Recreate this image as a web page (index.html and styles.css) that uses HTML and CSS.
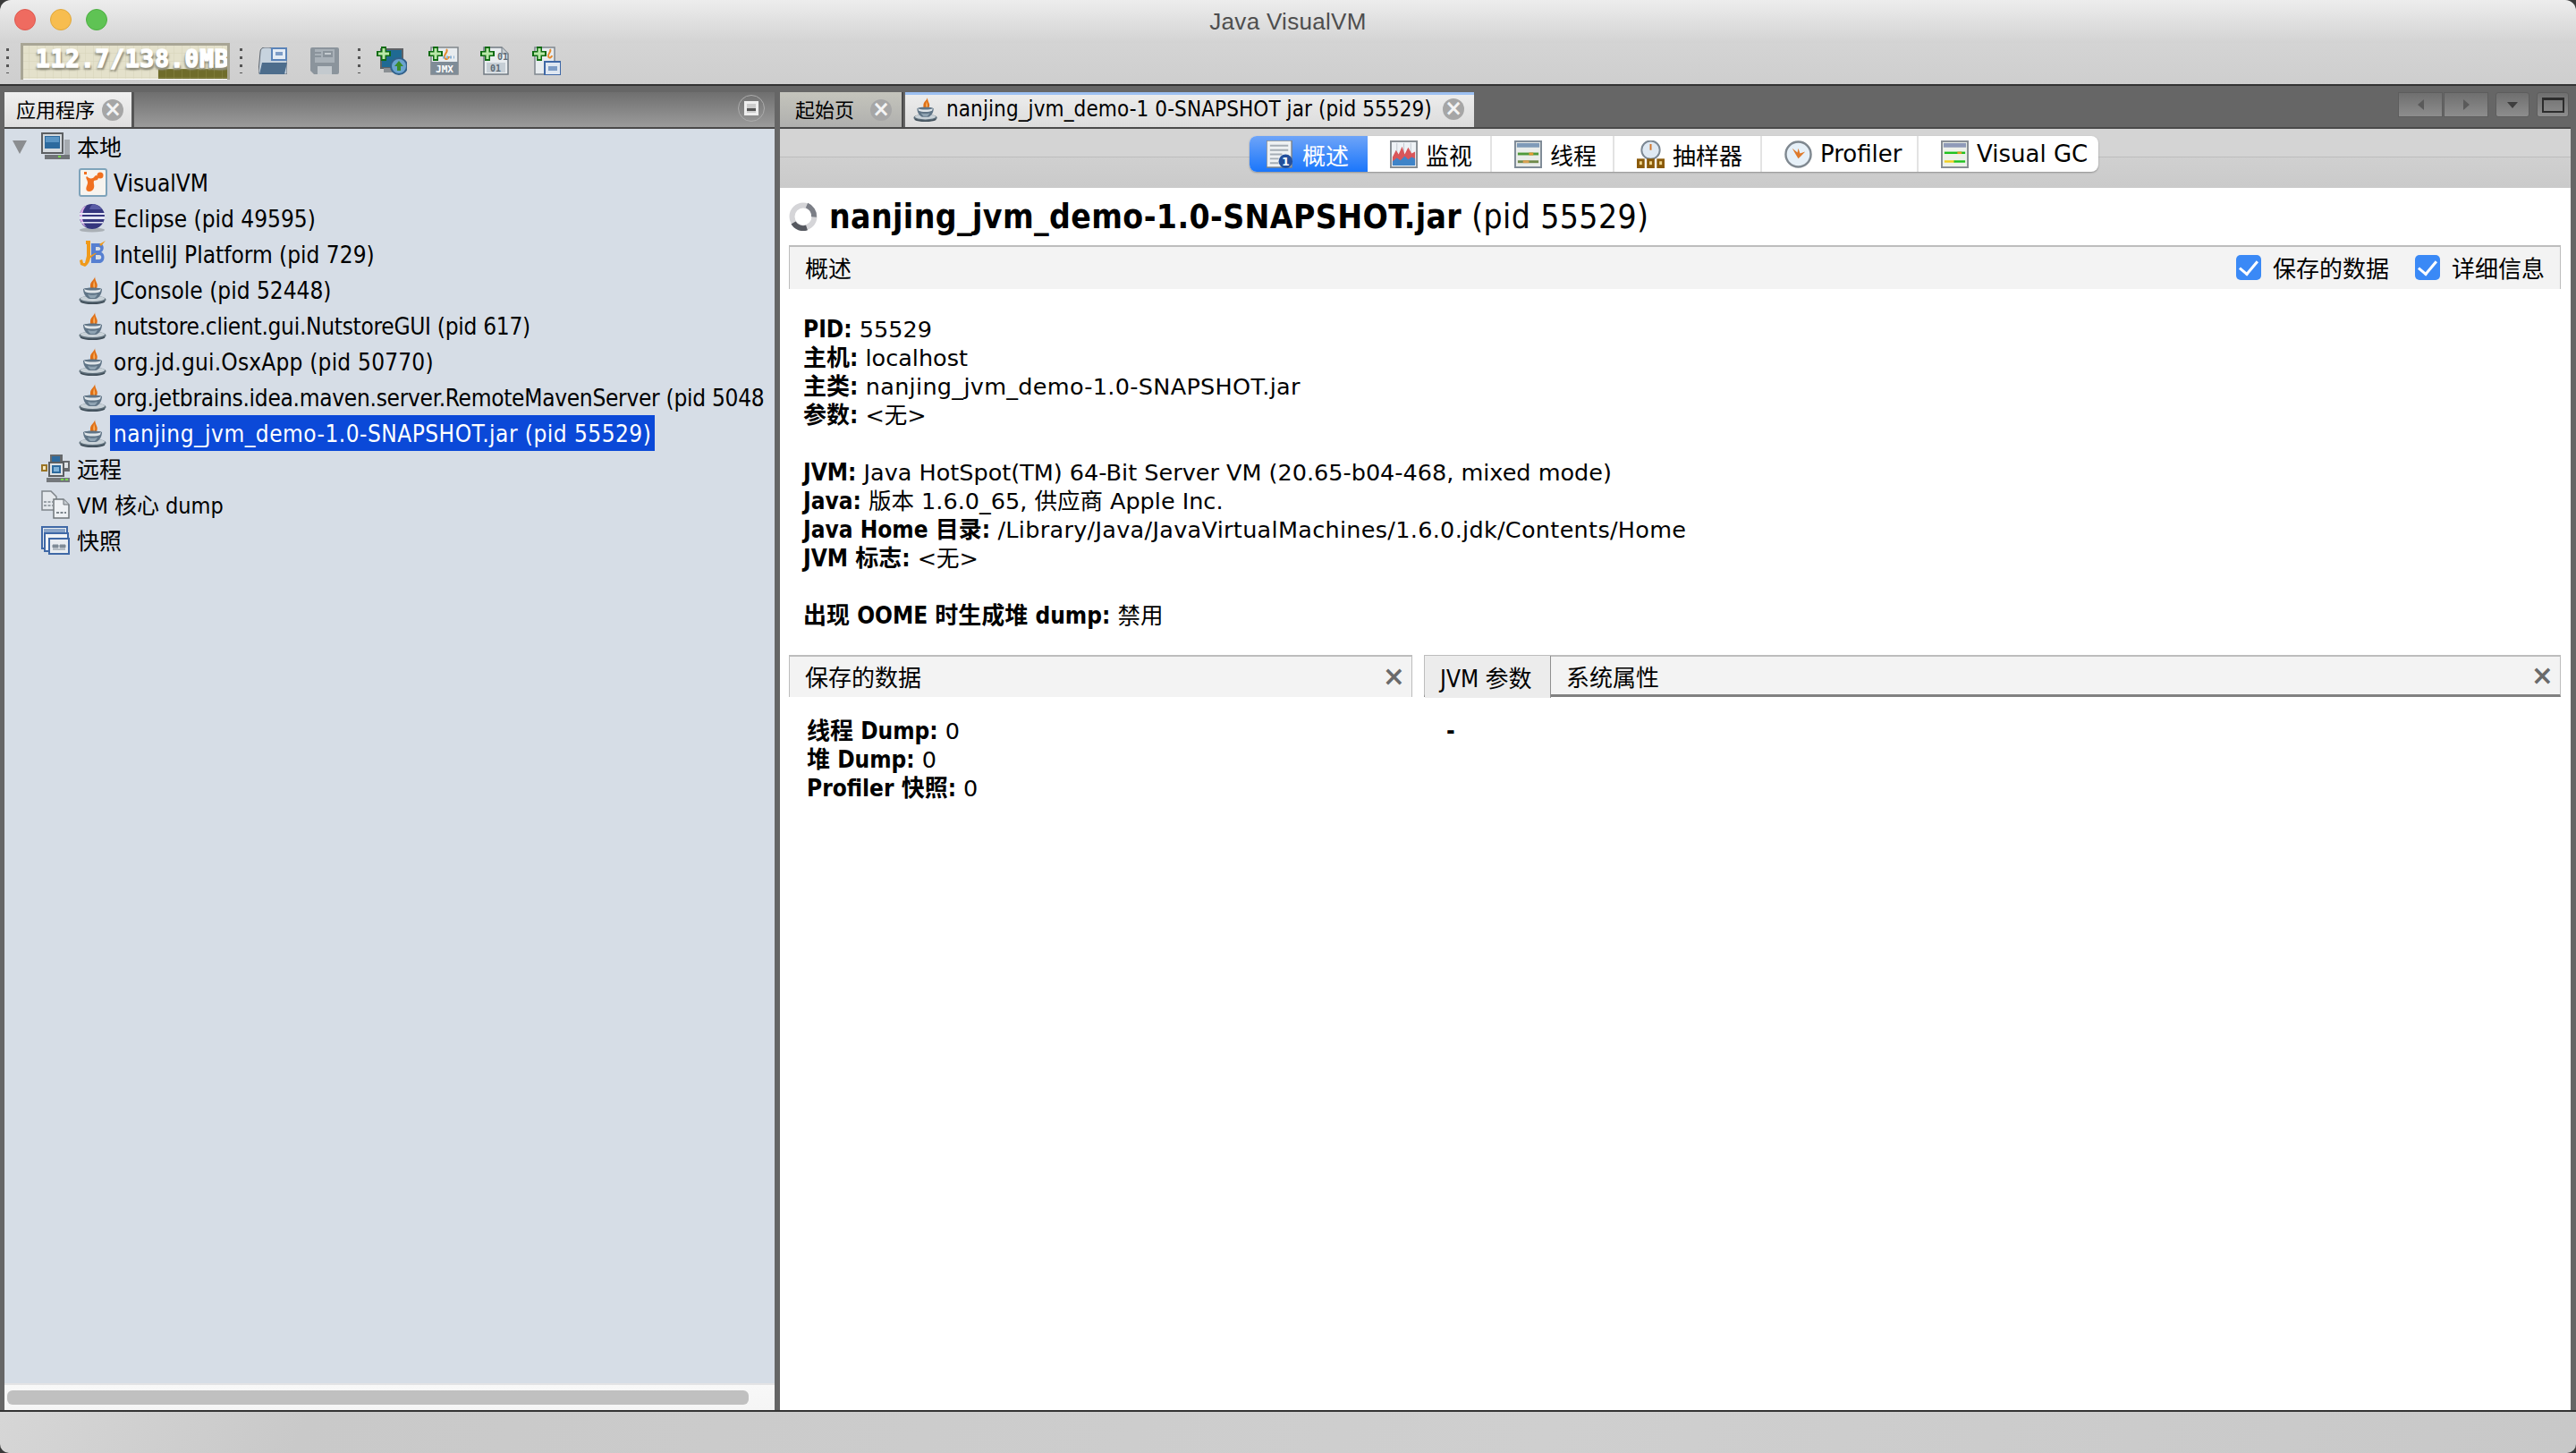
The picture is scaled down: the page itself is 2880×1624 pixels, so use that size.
FILE: index.html
```html
<!DOCTYPE html>
<html lang="zh">
<head>
<meta charset="utf-8">
<title>Java VisualVM</title>
<link rel="stylesheet" href="styles.css">
</head>
<body>
<svg class="defs" width="0" height="0" aria-hidden="true">
  <defs>
    <symbol id="java" viewBox="0 0 32 32">
      <path d="M18 0c1 4-5 6-5 11-.5 3 1 5 2 7 5-2 7-6 5-10-1-2-2-5-2-8z" fill="#e06f14"/>
      <path d="M17 5c0 3-1.500 5-.5 8l.5 2c1.500-2 1.500-4 1-6z" fill="#f6b060"/>
      <ellipse cx="15.500" cy="27" rx="15" ry="4.500" fill="#5f6f7b"/>
      <ellipse cx="15.500" cy="25.800" rx="13.500" ry="3.200" fill="#c9d2d8"/>
      <path d="M5 15c3-2 18-2 21 0 0 5-3 10-7 11h-7c-4-1-7-6-7-11z" fill="#5f7486"/>
      <path d="M6 15c3 2 16 2 19 0l-1 3c-4 2-13 2-17 0z" fill="#dfe5e9"/>
      <path d="M10 21c3 1 8 1 11 0-1 2-2 3-3 4h-5c-1-1-2-2-3-4z" fill="#8fa3b2"/>
      <path d="M2 29c6 3 21 3 27 0" stroke="#3f4d58" stroke-width="1.500" fill="none"/>
    </symbol>
    <symbol id="plus" viewBox="0 0 16 16">
      <path d="M5 0h6v5h5v6h-5v5H5v-5H0V5h5z" fill="#0e6b12"/>
      <path d="M6.500 2h3v4.500H14v3H9.500V14h-3V9.500H2v-3h4.500z" fill="#b9e8a8"/>
    </symbol>
    <symbol id="monitor" viewBox="0 0 32 32">
      <rect x="0" y="0" width="25" height="24" fill="#5c5f62"/>
      <rect x="2" y="2" width="21" height="20" fill="#d5dade"/>
      <rect x="4" y="4" width="17" height="14" fill="#2d6a9e"/>
      <rect x="5" y="5" width="15" height="6" fill="#5b95c4"/>
      <path d="M26 8h6v22h-24v-5h18z" fill="#a6abb0"/>
      <rect x="4" y="25" width="28" height="5" fill="#707478"/>
      <rect x="19" y="26" width="3" height="2" fill="#79d84a"/>
    </symbol>
    <symbol id="remote" viewBox="0 0 32 32">
      <rect x="10" y="0" width="14" height="10" fill="#66696c"/><rect x="12" y="2" width="9" height="6" fill="#2d6a9e"/>
      <rect x="22" y="7" width="10" height="12" fill="#66696c"/><rect x="24" y="9" width="6" height="6" fill="#dfe3e6"/>
      <rect x="8" y="8" width="18" height="17" fill="#5c5f62"/><rect x="10" y="10" width="14" height="13" fill="#dfe3e6"/>
      <rect x="12" y="12" width="10" height="9" fill="#2d6a9e"/><rect x="14" y="14" width="6" height="5" fill="#7fb2d9"/>
      <rect x="0" y="11" width="7" height="8" fill="#9a7424"/><rect x="2" y="13" width="3" height="4" fill="#f3e7c2"/>
      <rect x="6" y="26" width="26" height="5" fill="#74787c"/><rect x="22" y="27" width="3" height="2" fill="#79d84a"/><rect x="27" y="27" width="3" height="2" fill="#79d84a"/>
    </symbol>
    <symbol id="coredump" viewBox="0 0 32 32">
      <path d="M1 1h10l6 6v15H1z" fill="#e4e8ec" stroke="#7f858a" stroke-width="1.500"/>
      <path d="M3 13h10M3 17h10" stroke="#9aa2a8" stroke-width="2" stroke-dasharray="3 1.500"/>
      <path d="M14 10h11l6 6v15H14z" fill="#eef1f4" stroke="#6f757a" stroke-width="1.500"/>
      <path d="M25 10v6h6" fill="#c7cdd2" stroke="#6f757a"/>
      <path d="M17 25h11" stroke="#7d868c" stroke-width="2" stroke-dasharray="3 1.500"/>
    </symbol>
    <symbol id="snapshot" viewBox="0 0 32 32">
      <rect x="1" y="1" width="28" height="24" fill="#e9edf1" stroke="#3f68a6" stroke-width="2"/>
      <rect x="3" y="3" width="24" height="4" fill="#8aa5c9"/>
      <rect x="4" y="8" width="26" height="20" fill="#f0f3f6" stroke="#3f68a6" stroke-width="2"/>
      <rect x="9" y="14" width="22" height="17" fill="#e9edf1" stroke="#3f68a6" stroke-width="2"/>
      <path d="M13 21h6v3h-6zM21 21h6v3h-6zM13 26h14" fill="#7f8b96" stroke="#7f8b96"/>
    </symbol>
  </defs>
</svg>

<div class="window">
  <header class="titlebar">
    <div class="lights">
      <span class="light light-red"></span>
      <span class="light light-yellow"></span>
      <span class="light light-green"></span>
    </div>
    <div class="window-title">Java VisualVM</div>
  </header>

  <div class="toolbar">
    <span class="grip"></span>
    <div class="memory">
      <svg class="memory-chart" width="234" height="38" viewBox="0 0 234 38">
        <defs>
          <pattern id="memgrid" width="9" height="9" patternUnits="userSpaceOnUse">
            <path d="M9 0H0V9" fill="none" stroke="#d6d3ba" stroke-width="1"/>
          </pattern>
          <pattern id="memfill" width="9" height="9" patternUnits="userSpaceOnUse">
            <rect width="9" height="9" fill="#6f6c2a"/>
            <path d="M9 0H0V9" fill="none" stroke="#8b8845" stroke-width="1"/>
          </pattern>
        </defs>
        <rect width="234" height="38" fill="#e4e1cb"/>
        <rect width="234" height="38" fill="url(#memgrid)"/>
        <path d="M154 38V27H214V22H226V13H231V38z" fill="url(#memfill)"/>
      </svg>
      <span class="memory-text">112.7/138.0MB</span>
    </div>
    <span class="grip grip-b"></span>
    <button class="tool tool-open" aria-label="打开">
      <svg width="32" height="30" viewBox="0 0 32 30">
        <path d="M2 5c0-3 2-5 5-5h5c2 0 3 2 3 4v8h17v18H3c-2 0-3-1-3-3z" fill="#c7d3de" stroke="#59616a"/>
        <rect x="14" y="0" width="18" height="15" fill="#5a83b8"/><rect x="16" y="2" width="14" height="11" fill="#e4ecf5"/><rect x="19" y="5" width="8" height="4" fill="#7d9cc6"/>
        <path d="M4 17h28l-3 13H1z" fill="#4d6d8c"/>
      </svg>
    </button>
    <button class="tool tool-save" aria-label="保存">
      <svg width="32" height="30" viewBox="0 0 32 30">
        <path d="M0 2q0-2 2-2h28q2 0 2 2v26q0 2-2 2H4l-4-4z" fill="#8b949c"/>
        <rect x="5" y="2" width="22" height="15" fill="#a9b1b8"/><rect x="14" y="4" width="11" height="7" fill="#8b949c"/><rect x="16" y="6" width="7" height="2" fill="#c5cbd0"/>
        <path d="M5 6h7M5 10h7" stroke="#8b949c" stroke-width="2"/>
        <rect x="8" y="21" width="16" height="9" fill="#c3c9ce"/>
      </svg>
    </button>
    <span class="grip grip-c"></span>
    <button class="tool tool-add" aria-label="添加远程主机">
      <svg width="34" height="32" viewBox="0 0 34 32">
        <rect x="4" y="2" width="26" height="23" fill="#5e6165"/><rect x="6" y="4" width="22" height="19" fill="#1f6a93"/>
        <rect x="8" y="24" width="18" height="5" fill="#8a8f93"/>
        <circle cx="25" cy="22" r="9" fill="#6aa3cf" stroke="#31608a" stroke-width="2"/>
        <path d="M25 16l5 6h-3v5h-4v-5h-3z" fill="#3a8b2b"/>
        <use href="#plus" width="16" height="16" x="0" y="0"/>
      </svg>
    </button>
    <button class="tool tool-add" aria-label="添加 JMX">
      <svg width="34" height="32" viewBox="0 0 34 32">
        <rect x="3" y="1" width="30" height="30" fill="#e8ecef" stroke="#80868c" stroke-width="1.500"/>
        <path d="M20 3c3 3-3 5-2 9s5 1 5-1" stroke="#e68a2e" stroke-width="2" fill="none"/>
        <path d="M16 12h13" stroke="#8db2d4" stroke-width="3" stroke-dasharray="2 2"/>
        <rect x="3" y="17" width="30" height="14" fill="#7f8c97"/>
        <text class="icon-jmx" x="18" y="29" text-anchor="middle">JMX</text>
        <use href="#plus" width="16" height="16" x="0" y="0"/>
      </svg>
    </button>
    <button class="tool tool-dump" aria-label="添加转储">
      <svg width="32" height="32" viewBox="0 0 32 32">
        <path d="M4 1h20l7 7v23H4z" fill="#e8ecef" stroke="#707a82" stroke-width="1.500"/>
        <path d="M24 1v7h7" fill="#c7cdd2" stroke="#707a82"/>
        <text class="icon-bits" x="25" y="15" text-anchor="middle">01</text>
        <rect x="7" y="18" width="21" height="11" fill="#c6ced5"/>
        <text class="icon-bits" x="17" y="28" text-anchor="middle">01</text>
        <use href="#plus" width="16" height="16" x="0" y="0"/>
      </svg>
    </button>
    <button class="tool tool-snap" aria-label="添加快照">
      <svg width="32" height="32" viewBox="0 0 32 32">
        <rect x="3" y="1" width="22" height="30" fill="#e8ecef" stroke="#7f878e" stroke-width="1.500"/>
        <path d="M20 3c2 3-3 5-2 8s4 1 4-1" stroke="#e68a2e" stroke-width="2" fill="none"/>
        <rect x="14" y="17" width="18" height="15" fill="#dfe7f1" stroke="#3f68a6" stroke-width="2"/>
        <rect x="18" y="22" width="10" height="5" fill="#7d9cc6"/>
        <use href="#plus" width="16" height="16" x="0" y="0"/>
      </svg>
    </button>
  </div>

  <main class="main">
    <section class="left">
      <div class="strip strip-left">
        <div class="tab tab-app">
          <span>应用程序</span>
          <span class="round-x">×</span>
        </div>
        <span class="pane-btn"><i></i></span>
      </div>
      <div class="tree">
        <div class="row row-root">
          <span class="arrow"></span>
          <svg class="ico"><use href="#monitor"/></svg>
          <span class="label">本地</span>
        </div>
        <div class="row row-child">
          <svg class="ico" viewBox="0 0 32 32">
            <rect x="1" y="1" width="30" height="30" rx="2" fill="#f7f4ef" stroke="#7ea3ba" stroke-width="2"/>
            <path d="M6 4h3v3H6zM9 9c2 2 4 3 7 2l3-3 4 1-2 4-4 1c-1 3 1 5 0 8-1 4-6 5-8 3-2-3 1-6 1-9 0-3-3-5-1-7z" fill="#f0701f"/>
            <circle cx="24" cy="8" r="3.500" fill="#f0701f"/>
          </svg>
          <span class="label">VisualVM</span>
        </div>
        <div class="row row-child">
          <svg class="ico" viewBox="0 0 32 32">
            <ellipse cx="15" cy="29" rx="14" ry="2.500" fill="#aab0b6"/>
            <circle cx="15" cy="14" r="14" fill="#35367e"/>
            <path d="M1 14a14 14 0 0 1 8-12.500c-3 3-5 7-5 12.500s2 9 5 12A14 14 0 0 1 1 14z" fill="#d9a9e6"/>
            <path d="M1 10h28v2H1zM1 14h28v3H1zM3 20h24v1.500H3z" fill="#e4e6f5"/>
            <path d="M16 0a14 14 0 0 1 10 6H12c1-3 2-5 4-6z" fill="#5a5ca5"/>
          </svg>
          <span class="label">Eclipse (pid 49595)</span>
        </div>
        <div class="row row-child">
          <svg class="ico" viewBox="0 0 32 32">
            <path d="M14 4h9c6 0 6 8 2 10 5 1 5 12-2 12h-9z" fill="#567fd1"/>
            <path d="M19 8v4h3c3 0 3-4 0-4zM19 17v5h4c3 0 3-5 0-5z" fill="#d6dde6"/>
            <path d="M8 1h5l0 18c0 5-3 9-6 11l-5-2-1-5 3-1 1 4 2 0 2-8V5H8z" fill="#f09a1a"/>
            <path d="M11 19l7-4 2 0-9 7zM23 5l7-4-5 6z" fill="#f09a1a"/>
          </svg>
          <span class="label">IntelliJ Platform (pid 729)</span>
        </div>
        <div class="row row-child"><svg class="ico"><use href="#java"/></svg><span class="label">JConsole (pid 52448)</span></div>
        <div class="row row-child"><svg class="ico"><use href="#java"/></svg><span class="label fit-tight">nutstore.client.gui.NutstoreGUI (pid 617)</span></div>
        <div class="row row-child"><svg class="ico"><use href="#java"/></svg><span class="label fit-loose">org.jd.gui.OsxApp (pid 50770)</span></div>
        <div class="row row-child"><svg class="ico"><use href="#java"/></svg><span class="label fit-tight">org.jetbrains.idea.maven.server.RemoteMavenServer (pid 5048</span></div>
        <div class="row row-child"><svg class="ico"><use href="#java"/></svg><span class="label label-selected">nanjing_jvm_demo-1.0-SNAPSHOT.jar (pid 55529)</span></div>
        <div class="row row-root row-noarrow"><svg class="ico"><use href="#remote"/></svg><span class="label">远程</span></div>
        <div class="row row-root row-noarrow"><svg class="ico"><use href="#coredump"/></svg><span class="label">VM 核心 dump</span></div>
        <div class="row row-root row-noarrow"><svg class="ico"><use href="#snapshot"/></svg><span class="label">快照</span></div>
      </div>
      <div class="hscroll"><div class="thumb"></div></div>
    </section>

    <section class="right">
      <div class="strip strip-right">
        <div class="tab tab-start">
          <span>起始页</span>
          <span class="round-x">×</span>
        </div>
        <div class="tab tab-active">
          <svg class="ico-tab"><use href="#java"/></svg>
          <span class="tab-active-text">nanjing_jvm_demo-1 0-SNAPSHOT jar (pid 55529)</span>
          <span class="round-x">×</span>
        </div>
        <div class="strip-tools">
          <div class="tbtn-group">
            <span class="tbtn tbtn-nav"><i class="tri tri-left"></i></span>
            <span class="tbtn tbtn-nav"><i class="tri tri-right"></i></span>
          </div>
          <span class="tbtn tbtn-menu"><i class="tri tri-down"></i></span>
          <span class="tbtn tbtn-max"><i class="max-box"></i></span>
        </div>
      </div>

      <div class="subbar">
        <div class="views">
          <div class="view view-on">
            <svg class="view-ico" viewBox="0 0 32 32">
              <rect x="0" y="0" width="29" height="31" fill="#eef1f3" stroke="#77808a" stroke-width="1.500"/>
              <path d="M4 6h21M4 11h21M4 16h14M4 21h10M4 26h10" stroke="#a5adb5" stroke-width="2"/>
              <circle cx="22" cy="24" r="8" fill="#234f9b"/>
              <text class="icon-info" x="22" y="29" text-anchor="middle">1</text>
            </svg>
            <span>概述</span>
          </div>
          <div class="view">
            <svg class="view-ico" viewBox="0 0 32 32">
              <rect x="1" y="1" width="30" height="30" fill="#eef2f6" stroke="#868c92" stroke-width="2"/>
              <path d="M8 3v26M16 3v26M24 3v26" stroke="#c2c8cf"/>
              <path d="M3 19l4-8 3 5 4-9 3 9 4-8 4 7 4-2v15H3z" fill="#d9565a"/>
              <path d="M3 24l5-4 4 3 5-5 4 4 4-3 4 2v8H3z" fill="#3f84c8"/>
            </svg>
            <span>监视</span>
          </div>
          <div class="view">
            <svg class="view-ico" viewBox="0 0 32 32">
              <rect x="1" y="1" width="30" height="30" fill="#e9ecea" stroke="#7e8a96" stroke-width="2"/>
              <rect x="3" y="3" width="26" height="5" fill="#7e9ab8"/>
              <rect x="4" y="14" width="24" height="3" fill="#4f9a3a"/><rect x="17" y="14" width="5" height="3" fill="#e09a30"/>
              <rect x="4" y="23" width="24" height="3" fill="#6f8a4a"/><rect x="10" y="23" width="7" height="3" fill="#d8a050"/>
            </svg>
            <span>线程</span>
          </div>
          <div class="view">
            <svg class="view-ico" viewBox="0 0 32 32">
              <circle cx="16" cy="11" r="10.500" fill="#dfe9f3" stroke="#7c8894" stroke-width="2"/>
              <path d="M16 4v7" stroke="#d2752a" stroke-width="2"/>
              <rect x="0" y="21" width="9" height="11" fill="#8a5a0a"/><rect x="3" y="24" width="3" height="4" fill="#efd48a"/>
              <rect x="11.500" y="21" width="9" height="11" fill="#8a5a0a"/><rect x="14.500" y="24" width="3" height="4" fill="#efd48a"/>
              <rect x="23" y="21" width="9" height="11" fill="#8a5a0a"/><rect x="26" y="24" width="3" height="4" fill="#efd48a"/>
            </svg>
            <span>抽样器</span>
          </div>
          <div class="view">
            <svg class="view-ico" viewBox="0 0 32 32">
              <circle cx="16" cy="16" r="14.500" fill="#e6f0f8" stroke="#7f8890" stroke-width="2.500"/>
              <path d="M9 9l6 5 1-5 2 6 6-2-5 5-3 3-3-5z" fill="#de7a2c"/>
            </svg>
            <span>Profiler</span>
          </div>
          <div class="view">
            <svg class="view-ico" viewBox="0 0 32 32">
              <rect x="1" y="1" width="30" height="30" fill="#eef1ea" stroke="#868c92" stroke-width="2"/>
              <rect x="3" y="3" width="26" height="5" fill="#8f9ab8"/>
              <rect x="4" y="13" width="24" height="2.500" fill="#1fc21f"/><rect x="19" y="13" width="5" height="2.500" fill="#e0a020"/>
              <rect x="4" y="23" width="12" height="2.500" fill="#f0d020"/><rect x="15" y="23" width="13" height="2.500" fill="#1fc21f"/>
            </svg>
            <span>Visual GC</span>
          </div>
        </div>
      </div>

      <div class="content">
        <h1 class="heading">
          <svg class="spinner" viewBox="0 0 32 32">
            <circle cx="16" cy="16" r="12.500" fill="none" stroke="#d5d5d8" stroke-width="6"/>
            <path d="M5 23a13 13 0 0 0 15 5.500" fill="none" stroke="#55585f" stroke-width="6"/>
            <path d="M20 3.500a13 13 0 0 1 8 13" fill="none" stroke="#7b7e86" stroke-width="6"/>
          </svg>
          <span><b>nanjing_jvm_demo-1.0-SNAPSHOT.jar</b> (pid 55529)</span>
        </h1>

        <div class="section-bar">
          <span>概述</span>
          <div class="checks">
            <label class="check"><i class="box"></i>保存的数据</label>
            <label class="check"><i class="box"></i>详细信息</label>
          </div>
        </div>

        <div class="details">
          <div class="line"><b>PID:</b> 55529</div>
          <div class="line"><b>主机:</b> localhost</div>
          <div class="line line-wide"><b>主类:</b> nanjing_jvm_demo-1.0-SNAPSHOT.jar</div>
          <div class="line"><b>参数:</b> &lt;无&gt;</div>
          <div class="line line-gap"><b>JVM:</b> Java HotSpot(TM) 64-Bit Server VM (20.65-b04-468, mixed mode)</div>
          <div class="line"><b>Java:</b> 版本 1.6.0_65, 供应商 Apple Inc.</div>
          <div class="line line-wide"><b>Java Home 目录:</b> /Library/Java/JavaVirtualMachines/1.6.0.jdk/Contents/Home</div>
          <div class="line"><b>JVM 标志:</b> &lt;无&gt;</div>
          <div class="line line-gap"><b>出现 OOME 时生成堆 dump:</b> 禁用</div>
        </div>

        <div class="panels">
          <div class="panel">
            <div class="panel-bar">
              <span class="panel-title">保存的数据</span>
              <span class="flat-x">×</span>
            </div>
            <div class="panel-body panel-body-saved">
              <div class="line"><b>线程 Dump:</b> 0</div>
              <div class="line"><b>堆 Dump:</b> 0</div>
              <div class="line"><b>Profiler 快照:</b> 0</div>
            </div>
          </div>
          <div class="panel">
            <div class="panel-bar panel-bar-tabs">
              <span class="ptab ptab-on">JVM 参数</span>
              <span class="ptab">系统属性</span>
              <span class="flat-x flat-x-end">×</span>
            </div>
            <div class="panel-body panel-body-args">
              <div class="line"><b>-</b></div>
            </div>
          </div>
        </div>
      </div>
    </section>
  </main>

  <footer class="status"></footer>
</div>
</body>
</html>
```

FILE: styles.css
```css
* { box-sizing: border-box; }
html, body { margin: 0; padding: 0; background: #3a3a3a; }
body {
  width: 2880px;
  height: 1624px;
  overflow: hidden;
  font-family: "DejaVu Sans", "Noto Sans CJK SC", sans-serif;
  font-stretch: condensed;
  color: #000;
}
.defs { position: absolute; }
button { border: 0; background: none; padding: 0; margin: 0; display: block; line-height: 0; }

.window {
  width: 2880px;
  height: 1624px;
  display: flex;
  flex-direction: column;
  border-radius: 12px 12px 10px 10px;
  overflow: hidden;
}

/* title bar */
.titlebar {
  height: 48px;
  flex: none;
  position: relative;
  display: flex;
  align-items: center;
  justify-content: center;
  background: linear-gradient(#ededed, #d3d3d3);
}
.lights { position: absolute; left: 16px; top: 10px; display: flex; gap: 16px; }
.light { width: 24px; height: 24px; border-radius: 50%; display: block; }
.light-red { background: #ef6b60; border: 1px solid #dd5a50; }
.light-yellow { background: #f7bd4f; border: 1px solid #dfa73c; }
.light-green { background: #5fc354; border: 1px solid #4dae43; }
.window-title { font-size: 26px; color: #4e4e4e; font-family: "Liberation Sans", sans-serif; letter-spacing: .3px; }

/* toolbar */
.toolbar {
  height: 46px;
  flex: none;
  display: flex;
  align-items: center;
  padding: 0 0 6px 7px;
  background: linear-gradient(#d4d4d4, #cecece);
}
.grip {
  width: 3px;
  height: 28px;
  flex: none;
  margin-right: 13px;
  background: repeating-linear-gradient(#555 0 3px, transparent 3px 9px);
}
.grip-b { margin-left: 11px; margin-right: 18px; }
.grip-c { margin-left: 21px; margin-right: 18px; }
.memory {
  position: relative;
  width: 234px;
  height: 41px;
  flex: none;
  margin-top: 1px;
  border: 3px solid #a8a595;
  border-bottom: 0;
  box-shadow: inset 0 -3px 0 #fff;
  overflow: hidden;
}
.memory-chart { display: block; position: absolute; left: -3px; top: -1px; }
.memory-text {
  position: absolute;
  left: 14px;
  top: 0;
  font: bold 26px/30px "DejaVu Sans Mono", monospace;
  letter-spacing: 1px;
  color: #fff;
  -webkit-text-stroke: 1.5px #fff;
  text-shadow: 2px 3px 2px #8f8d7c, -2px 3px 2px #9b9987;
  white-space: nowrap;
}
.tool-open { margin-right: 26px; }
.tool-save { margin-right: 0; }
.tool-add { margin-right: 24px; }
.tool-dump { margin-right: 26px; }
.icon-jmx { font: bold 11px "DejaVu Sans Mono", monospace; fill: #fff; }
.icon-bits { font: bold 10px "DejaVu Sans Mono", monospace; fill: #5d6a75; }
.icon-info { font: bold 13px "DejaVu Sans", sans-serif; fill: #fff; }

/* main area */
.main {
  flex: 1;
  min-height: 0;
  display: flex;
  gap: 6px;
  padding: 0 6px 0 5px;
  background: #666;
  border-top: 2px solid #333;
  border-bottom: 2px solid #333;
}
.left { width: 861px; flex: none; display: flex; flex-direction: column; }
.right { flex: 1; min-width: 0; display: flex; flex-direction: column; }

.strip { height: 48px; flex: none; display: flex; align-items: flex-end; position: relative; padding-bottom: 2px; border-bottom: 2px solid #4a4a4a; }
.strip-left { background: linear-gradient(#666 0 7px, #6f6f6f 7px, #9b9b9b 100%); }
.strip-right { background: #666; gap: 2px; }

.tab {
  height: 39px;
  display: flex;
  align-items: center;
  padding-bottom: 2px;
  font-size: 23px;
  flex: none;
  position: relative;
  top: 2px;
}
.tab-app { width: 145px; padding: 0 9px 0 13px; justify-content: space-between; background: linear-gradient(#f0f0f0, #dfdfdf); border-right: 3px solid #555; font-size: 22px; }
.tab-start { width: 138px; padding: 0 11px 0 17px; justify-content: space-between; background: linear-gradient(#c4c4bc, #b0b0ae); border-right: 2px solid #4a4a4a; font-size: 22px; }
.tab-app > span:first-child, .tab-start > span:first-child { position: relative; top: -2px; }
.tab-active { width: 636px; padding: 0 11px 2px 9px; background: linear-gradient(#9cc0f2 0 3px, #ececec 3px, #dcdcdc); }
.ico-tab { width: 28px; height: 30px; flex: none; margin-right: 9px; }
.tab-active-text { white-space: nowrap; font-size: 24px; letter-spacing: .1px; }
.tab-active .round-x { margin-left: auto; }
.round-x {
  width: 24px; height: 24px; flex: none;
  border-radius: 50%;
  background: #a6a6a6;
  color: #f4f4f4;
  font: bold 24px/22px "DejaVu Sans", sans-serif;
  text-align: center;
}
.pane-btn {
  position: absolute;
  right: 11px;
  top: 10px;
  width: 30px;
  height: 30px;
  border-radius: 50%;
  border: 1px solid #acacac;
  display: flex;
  align-items: center;
  justify-content: center;
}
.pane-btn i {
  display: block;
  width: 16px;
  height: 16px;
  background: linear-gradient(#ccc 0 5px, #555 5px 8px, #ccc 8px);
  border: 3px solid #eee;
}
.strip-tools { position: absolute; right: 2px; top: 7px; display: flex; gap: 8px; }
.tbtn-group { display: flex; gap: 1px; margin-right: 0; }
.tbtn {
  height: 28px;
  display: flex;
  align-items: center;
  justify-content: center;
  background: linear-gradient(#6f6f6f, #8d8d8d);
  border: 1px solid #5d5d5d;
}
.tbtn-nav { width: 50px; }
.tbtn-menu { width: 38px; border-radius: 3px; }
.tbtn-max { width: 36px; border-radius: 3px; }
.tri { display: block; width: 0; height: 0; border: 6px solid transparent; }
.tri-left { border-left: 0; border-right: 7px solid #5a5a5a; border-top-width: 6px; border-bottom-width: 6px; }
.tri-right { border-right: 0; border-left: 7px solid #5a5a5a; }
.tri-down { border-bottom: 0; border-top: 7px solid #3e3e3e; }
.max-box { display: block; width: 25px; height: 17px; border: 2px solid #2c2c2c; border-top-width: 3px; }

/* view switcher */
.subbar {
  height: 66px;
  flex: none;
  display: flex;
  justify-content: flex-start;
  padding: 8px 0 0 525px;
  background: linear-gradient(#d4d4d4 0 31px, #bdbdbd 31px 32px, #d0d0d0 32px, #cacaca);
}
.views {
  display: grid;
  grid-template-columns: 132px 139px 137px 165px 175px 201px;
  height: 40px;
  background: #fff;
  border-radius: 8px;
  box-shadow: 0 1px 2px #8f8f8f;
  overflow: hidden;
}
.view {
  display: flex;
  align-items: center;
  gap: 9px;
  padding-left: 25px;
  font-size: 26px;
  font-stretch: normal;
  border-right: 2px solid #e3e3e3;
  white-space: nowrap;
}
.view:last-child { border-right: 0; }
.view-on { background: linear-gradient(#6ea4f8, #1a76fb); color: #fff; padding-left: 19px; border-right: 0; }
.view-ico { width: 31px; height: 31px; flex: none; }

/* tree */
.tree { flex: 1; min-height: 0; background: #d6dde6; overflow: hidden; }
.row { height: 40px; display: flex; align-items: center; font-size: 26px; white-space: nowrap; }
.row-root { padding-left: 41px; position: relative; }
.row-child { padding-left: 83px; }
.row-noarrow { padding-left: 41px; }
.ico { width: 32px; height: 32px; flex: none; }
.row-root .ico { margin-right: 8px; }
.row-child .ico { margin-right: 3px; }
.arrow {
  position: absolute;
  left: 9px;
  top: 13px;
  border-left: 8px solid transparent;
  border-right: 8px solid transparent;
  border-top: 15px solid #8b8d90;
}
.label { padding: 0 4px; height: 40px; line-height: 42px; }
.row-root .label { padding: 0; font-size: 25px; line-height: 44px; }
.label-selected { background: #0b49d8; color: #fff; letter-spacing: .47px; }
.fit-tight { letter-spacing: -.28px; }
.fit-loose { letter-spacing: .2px; }
.hscroll { height: 30px; flex: none; padding: 8px 29px 6px 3px; background: linear-gradient(#e3e3e5 0 2px, #f8f8f8 2px, #f5f5f5); }
.thumb { height: 16px; background: #c0c0c0; border-radius: 6px; }

/* content */
.content { flex: 1; min-height: 0; background: #fff; padding: 0 11px 0 10px; overflow: hidden; }
.heading {
  height: 64px;
  margin: 0;
  display: flex;
  align-items: center;
  gap: 13px;
  font-size: 37px;
  letter-spacing: .4px;
  font-weight: 400;
  white-space: nowrap;
}
.spinner { width: 32px; height: 32px; flex: none; }
.section-bar {
  height: 49px;
  display: flex;
  align-items: center;
  justify-content: space-between;
  padding: 0 17px 2px 17px;
  background: #f3f3f3;
  border: 1px solid #bdbdbd;
  border-top-width: 2px;
  border-bottom: 0;
  font-size: 26px;
}
.checks { display: flex; gap: 29px; }
.check { display: flex; align-items: center; gap: 13px; }
.box {
  width: 28px; height: 28px;
  border-radius: 5px;
  background: #3a89f6;
  display: flex;
  align-items: center;
  justify-content: center;
}
.box::after {
  content: "";
  display: block;
  width: 9px;
  height: 17px;
  margin-top: -4px;
  border-right: 3px solid #fff;
  border-bottom: 3px solid #fff;
  transform: rotate(40deg);
}
.details { margin-top: 29px; padding-left: 16px; }
.line { font-size: 25.5px; font-stretch: normal; line-height: 32px; white-space: nowrap; }
.line b { font-stretch: condensed; font-size: 26px; }
.line-wide { letter-spacing: .3px; }
.line-wide b { letter-spacing: 0; }
.line-gap { margin-top: 32px; }
.panels { display: grid; grid-template-columns: 697px 1271px; gap: 13px; margin-top: 28px; }
.panel-bar {
  height: 47px;
  display: flex;
  align-items: center;
  padding-bottom: 2px;
  background: #f3f3f3;
  border: 1px solid #bdbdbd;
  border-top-width: 2px;
  border-bottom: 0;
  font-size: 26px;
  padding-right: 7px;
}
.panel-title { padding-left: 17px; }
.flat-x { margin-left: auto; font: bold 30px/30px "DejaVu Sans", sans-serif; color: #6a6a6a; }
.panel-bar-tabs { border-bottom: 3px solid #808080; padding-bottom: 0; }
.ptab { display: flex; align-items: center; height: 44px; padding: 0 17px; white-space: nowrap; }
.ptab-on {
  width: 141px;
  padding: 0 0 0 17px;
  background: #ececec;
  border-right: 1px solid #8f8f8f;
  height: 47px;
  margin-bottom: -3px;
}
.panel-body { padding-top: 22px; }
.panel-body-saved { padding-left: 20px; }
.panel-body-args { padding-left: 25px; }

.status { height: 46px; flex: none; background: linear-gradient(115deg, #d6d6d6, #c9c9c9 12%, #cfcfcf 60%, #c8c8c8); }
```
